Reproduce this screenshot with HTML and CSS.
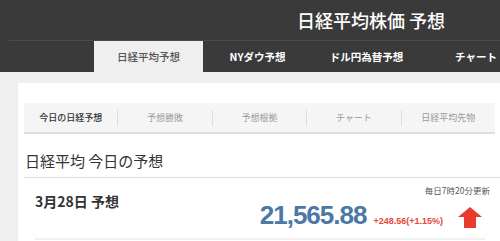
FILE: index.html
```html
<!DOCTYPE html>
<html lang="ja">
<head>
  <meta charset="UTF-8" />
  <meta name="viewport" content="width=device-width, initial-scale=1" />
  <title>日経平均株価 予想</title>
  <link rel="stylesheet" href="styles.css">
</head>
<body>
  <header class="site-header">
    <div class="title-row">
      <h1 class="site-title">日経平均株価 予想</h1>
    </div>
    <nav class="main-nav">
      <a class="nav-item active" href="#">日経平均予想</a>
      <a class="nav-item" href="#">NYダウ予想</a>
      <a class="nav-item" href="#">ドル円為替予想</a>
      <a class="nav-item" href="#">チャート</a>
    </nav>
  </header>

  <main class="page">
    <div class="card">
      <ul class="sub-nav">
        <li class="sub-item current">今日の日経予想</li>
        <li class="sub-item">予想勝敗</li>
        <li class="sub-item">予想根拠</li>
        <li class="sub-item">チャート</li>
        <li class="sub-item">日経平均先物</li>
      </ul>

      <h2 class="section-title">日経平均 今日の予想</h2>

      <div class="forecast">
        <div class="forecast-date">3月28日 予想</div>
        <div class="forecast-side">
          <div class="update-note">毎日7時20分更新</div>
          <div class="price-row">
            <span class="price">21,565.88</span>
            <span class="change">+248.56(+1.15%)</span>
            <svg class="arrow" width="24" height="21" viewBox="0 0 24 21">
              <polygon points="12,0 24,10 18,10 18,21 6,21 6,10 0,10" fill="#e63b2e" />
            </svg>
          </div>
        </div>
      </div>
      <div class="detail-box"></div>
    </div>
  </main>
</body>
</html>
```

FILE: styles.css
```css
* {
  box-sizing: border-box;
}
html, body {
  height: 241px;
  overflow: hidden;
}
body {
  margin: 0;
  font-family: "Noto Sans CJK JP", "Liberation Sans", sans-serif;
  background: #efefef;
  color: #333;
}
.site-header {
  background: #3a3a3a;
}
.title-row {
  height: 41px;
  margin-left: 9px;
  padding-left: 288px;
  border-bottom: 1px solid #4b4b4b;
  display: flex;
  align-items: center;
}
.site-title {
  margin: 0;
  font-size: 18px;
  font-weight: 500;
  color: #fff;
  white-space: nowrap;
}
.main-nav {
  display: flex;
  height: 31px;
  padding-left: 94px;
  overflow: hidden;
}
.nav-item {
  flex: 0 0 109px;
  display: flex;
  align-items: center;
  justify-content: center;
  font-size: 10.5px;
  font-weight: bold;
  color: #fff;
  text-decoration: none;
  white-space: nowrap;
}
.nav-item:last-child {
  flex: 0 1 109px;
  min-width: 0;
  justify-content: flex-start;
  padding-left: 34px;
}
.nav-item.active {
  background: #efefef;
  color: #555;
  font-weight: 500;
}
.page {
  padding: 11px 0 0 18px;
}
.card {
  background: #fff;
  padding: 20px 0 0 6px;
  height: 158px;
  overflow: hidden;
}
.sub-nav {
  list-style: none;
  margin: 0;
  padding: 0;
  width: 471px;
  height: 31px;
  display: flex;
  align-items: center;
  background: #f5f5f5;
  border-bottom: 2px solid #e0e0e0;
}
.sub-item {
  flex: 1;
  text-align: center;
  font-size: 9px;
  color: #999;
  border-left: 1px solid #ddd;
  line-height: 16px;
}
.sub-item:first-child {
  border-left: none;
}
.sub-item.current {
  color: #333;
  font-weight: 500;
}
.section-title {
  margin: 0;
  padding: 16px 0 6px 1px;
  font-size: 15px;
  font-weight: normal;
  color: #333;
  border-bottom: 1px solid #ddd;
}
.forecast {
  width: 471px;
  display: flex;
  justify-content: space-between;
  padding: 6px 5px 0 11px;
}
.forecast-date {
  margin-top: 7px;
  font-size: 14px;
  font-weight: bold;
  color: #333;
}
.forecast-side {
  display: flex;
  flex-direction: column;
  align-items: flex-end;
}
.update-note {
  font-size: 8.5px;
  line-height: 12px;
  color: #555;
}
.price-row {
  display: flex;
  align-items: flex-end;
  margin-top: 5px;
  padding-right: 8px;
}
.price {
  font-family: "Liberation Sans", Arial, sans-serif;
  font-size: 26px;
  line-height: 28px;
  font-weight: bold;
  letter-spacing: -1px;
  color: #4b78a6;
}
.change {
  font-family: "Liberation Sans", Arial, sans-serif;
  font-size: 9px;
  font-weight: bold;
  color: #e8453c;
  margin: 0 15px 3px 7px;
}
.arrow {
  display: block;
  margin-bottom: 1px;
}
.detail-box {
  margin: 9px 0 0 11px;
  width: 450px;
  height: 2px;
  background: #f0f0f0;
}
```
